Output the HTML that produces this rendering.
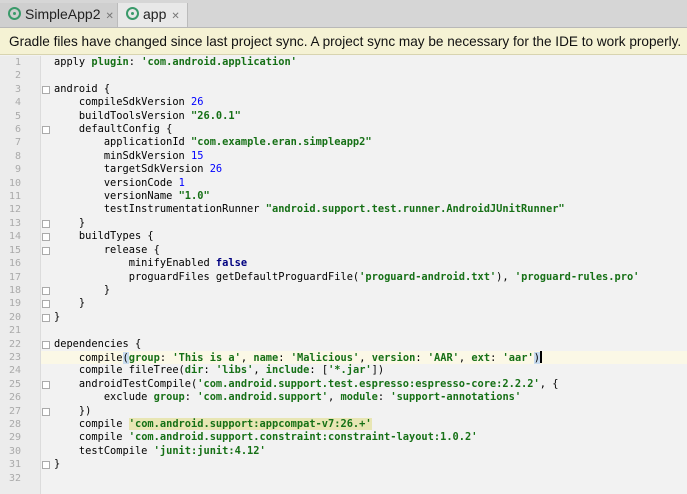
<!DOCTYPE html>
<html><head><style>
body{margin:0;width:687px;height:494px;overflow:hidden;background:#f2f2f2;font-family:"Liberation Sans",sans-serif;position:relative}
#tabs{position:absolute;left:0;top:0;width:687px;height:27px;background:#d6d6d6;border-bottom:1px solid #b8b8b8}
.tab{position:absolute;top:3px;height:24px;font-size:14px;line-height:23px;color:#222}
.ic{display:inline-block;width:9px;height:9px;border:2px solid #3a9a6a;border-radius:50%;vertical-align:-1px;margin-right:4px;position:relative}
.ic:after{content:"";position:absolute;left:3px;top:3px;width:3px;height:3px;background:#3a9a6a;border-radius:50%}
.x{font-size:10px;color:#777;margin-left:5px}
#banner{position:absolute;left:0;top:28px;width:687px;height:27px;background:#f5f2d4;border-bottom:1px solid #d8d4b0;font-size:13.6px;line-height:27px;padding-left:9px;color:#111;white-space:nowrap;box-sizing:border-box}
#gut{position:absolute;left:0;top:56px;width:40px;height:438px;background:#ececec;border-right:1px solid #dcdcdc}
#code{position:absolute;left:0;top:56px;width:687px;font-family:"DejaVu Sans Mono",monospace;font-size:10.35px}
.l{height:13.42px;line-height:13.42px;white-space:pre;position:relative}
.n{position:absolute;left:0;width:21px;text-align:right;color:#aaa;font-size:10px}
.t{position:absolute;left:54px;color:#000}
.s{color:#167016;font-weight:bold}
.k{color:#000080;font-weight:bold}
.g{color:#167016;font-weight:bold}
.num{color:#0000ff}
.cur{background:#fbf8e6}
.hl{background:#e8e6b4}
.bm{background:#c8dcf0}
.caret{display:inline-block;width:2px;height:12px;background:#000;vertical-align:-2px}
.f{position:absolute;left:42px;top:3px;width:6px;height:6px;border:1px solid #aaa;background:#fff}
</style></head><body>
<div id="tabs">
<div class="tab" style="left:0;width:118px;padding-left:8px;background:#cfcfcf;border-right:1px solid #bbb;box-sizing:border-box"><span class="ic"></span>SimpleApp2<span class="x">✕</span></div>
<div class="tab" style="left:118px;width:70px;padding-left:8px;background:#e8e8e8;border-right:1px solid #bbb;box-sizing:border-box"><span class="ic"></span>app<span class="x">✕</span></div>
</div>
<div id="banner">Gradle files have changed since last project sync. A project sync may be necessary for the IDE to work properly.</div>
<div id="gut"></div>
<div id="code" style="top:56px">
<div class="l"><span class="n">1</span><span class="t">apply <span class="g">plugin</span>: <span class="s">'com.android.application'</span></span></div>
<div class="l"><span class="n">2</span></div>
<div class="l"><span class="n">3</span><span class="f"></span><span class="t">android {</span></div>
<div class="l"><span class="n">4</span><span class="t">    compileSdkVersion <span class="num">26</span></span></div>
<div class="l"><span class="n">5</span><span class="t">    buildToolsVersion <span class="s">"26.0.1"</span></span></div>
<div class="l"><span class="n">6</span><span class="f"></span><span class="t">    defaultConfig {</span></div>
<div class="l"><span class="n">7</span><span class="t">        applicationId <span class="s">"com.example.eran.simpleapp2"</span></span></div>
<div class="l"><span class="n">8</span><span class="t">        minSdkVersion <span class="num">15</span></span></div>
<div class="l"><span class="n">9</span><span class="t">        targetSdkVersion <span class="num">26</span></span></div>
<div class="l"><span class="n">10</span><span class="t">        versionCode <span class="num">1</span></span></div>
<div class="l"><span class="n">11</span><span class="t">        versionName <span class="s">"1.0"</span></span></div>
<div class="l"><span class="n">12</span><span class="t">        testInstrumentationRunner <span class="s">"android.support.test.runner.AndroidJUnitRunner"</span></span></div>
<div class="l"><span class="n">13</span><span class="f"></span><span class="t">    }</span></div>
<div class="l"><span class="n">14</span><span class="f"></span><span class="t">    buildTypes {</span></div>
<div class="l"><span class="n">15</span><span class="f"></span><span class="t">        release {</span></div>
<div class="l"><span class="n">16</span><span class="t">            minifyEnabled <span class="k">false</span></span></div>
<div class="l"><span class="n">17</span><span class="t">            proguardFiles getDefaultProguardFile(<span class="s">'proguard-android.txt'</span>), <span class="s">'proguard-rules.pro'</span></span></div>
<div class="l"><span class="n">18</span><span class="f"></span><span class="t">        }</span></div>
<div class="l"><span class="n">19</span><span class="f"></span><span class="t">    }</span></div>
<div class="l"><span class="n">20</span><span class="f"></span><span class="t">}</span></div>
<div class="l"><span class="n">21</span></div>
<div class="l"><span class="n">22</span><span class="f"></span><span class="t">dependencies {</span></div>
<div class="l cur" style="margin-left:41px"><span class="n" style="left:-41px">23</span><span class="t" style="left:13px">    compile<span class="bm">(</span><span class="g">group</span>: <span class="s">'This is a'</span>, <span class="g">name</span>: <span class="s">'Malicious'</span>, <span class="g">version</span>: <span class="s">'AAR'</span>, <span class="g">ext</span>: <span class="s">'aar'</span><span class="bm">)</span><span class="caret"></span></span></div>
<div class="l"><span class="n">24</span><span class="t">    compile fileTree(<span class="g">dir</span>: <span class="s">'libs'</span>, <span class="g">include</span>: [<span class="s">'*.jar'</span>])</span></div>
<div class="l"><span class="n">25</span><span class="f"></span><span class="t">    androidTestCompile(<span class="s">'com.android.support.test.espresso:espresso-core:2.2.2'</span>, {</span></div>
<div class="l"><span class="n">26</span><span class="t">        exclude <span class="g">group</span>: <span class="s">'com.android.support'</span>, <span class="g">module</span>: <span class="s">'support-annotations'</span></span></div>
<div class="l"><span class="n">27</span><span class="f"></span><span class="t">    })</span></div>
<div class="l"><span class="n">28</span><span class="t">    compile <span class="s hl">'com.android.support:appcompat-v7:26.+'</span></span></div>
<div class="l"><span class="n">29</span><span class="t">    compile <span class="s">'com.android.support.constraint:constraint-layout:1.0.2'</span></span></div>
<div class="l"><span class="n">30</span><span class="t">    testCompile <span class="s">'junit:junit:4.12'</span></span></div>
<div class="l"><span class="n">31</span><span class="f"></span><span class="t">}</span></div>
<div class="l"><span class="n">32</span></div>
</div>
</body></html>
